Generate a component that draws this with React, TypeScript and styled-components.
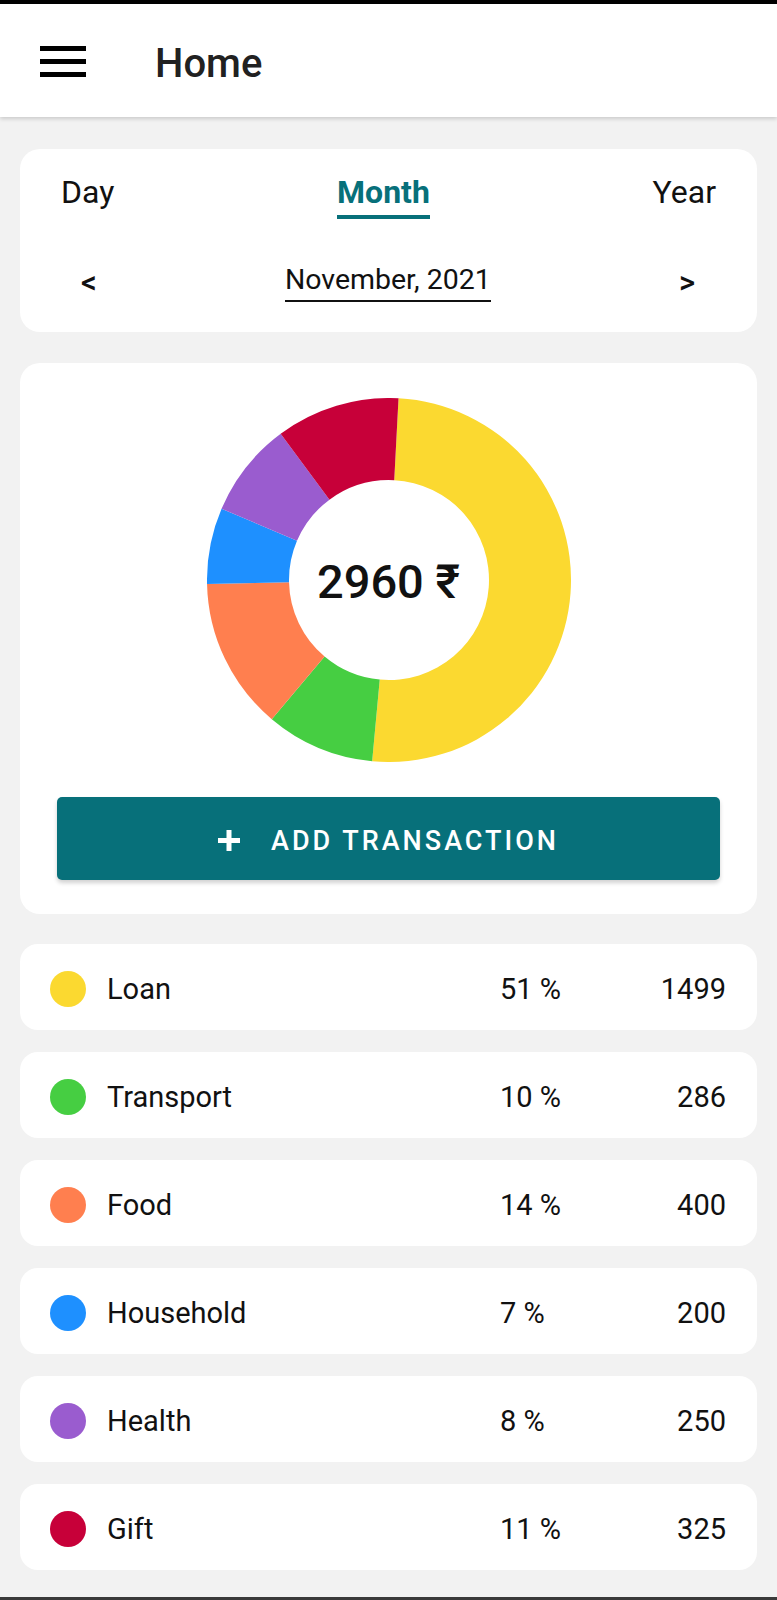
import React from "react";
import styled, { createGlobalStyle } from "styled-components";

const GlobalStyle = createGlobalStyle`
  html, body {
    margin: 0;
    padding: 0;
    background: #f2f2f2;
    font-family: Roboto, "Noto Sans", "DejaVu Sans", sans-serif;
  }
  * { box-sizing: border-box; }
`;

const TEAL = "#07707a";

type Item = { name: string; value: number; color: string };

const items: Item[] = [
  { name: "Loan", value: 1499, color: "#fbd930" },
  { name: "Transport", value: 286, color: "#46ce42" },
  { name: "Food", value: 400, color: "#ff7f4f" },
  { name: "Household", value: 200, color: "#1e90ff" },
  { name: "Health", value: 250, color: "#9a5ccf" },
  { name: "Gift", value: 325, color: "#c70039" },
];

const Page = styled.div`
  height: 1600px;
  display: flex;
  flex-direction: column;
  border-top: 4px solid #000;
  border-bottom: 3px solid #3a3a3a;
  background: #f2f2f2;
  overflow: hidden;
`;

const Header = styled.header`
  height: 113px;
  flex-shrink: 0;
  background: #fff;
  display: flex;
  align-items: center;
  padding-left: 40px;
  gap: 69px;
  box-shadow: 0 2px 4px rgba(0, 0, 0, 0.16);
  position: relative;
  z-index: 1;
`;

const Burger = styled.div`
  width: 46px;
  display: flex;
  flex-direction: column;
  gap: 8px;
  margin-top: 1px;
  & > span {
    display: block;
    height: 5px;
    background: #000;
  }
`;

const Title = styled.h1`
  margin: 0;
  font-size: 40px;
  font-weight: 500;
  color: #212121;
  line-height: 1;
  margin-top: 6px;
`;

const Content = styled.main`
  padding: 32px 20px 0;
  display: flex;
  flex-direction: column;
`;

const Card = styled.section`
  background: #fff;
  border-radius: 20px;
`;

const TabCard = styled(Card)`
  padding: 24px 41px 30px;
  display: flex;
  flex-direction: column;
  gap: 44px;
`;

const Tabs = styled.div`
  display: flex;
  justify-content: space-between;
  align-items: flex-start;
`;

const Tab = styled.div<{ $active?: boolean }>`
  display: flex;
  flex-direction: column;
  align-items: stretch;
  font-size: 32px;
  line-height: 38px;
  font-weight: ${(p) => (p.$active ? 700 : 400)};
  color: ${(p) => (p.$active ? TEAL : "#111")};
  &::after {
    content: "";
    display: block;
    height: 4px;
    margin-top: 4px;
    background: ${(p) => (p.$active ? TEAL : "transparent")};
  }
`;

const NavRow = styled.div`
  display: flex;
  justify-content: space-between;
  align-items: center;
  padding: 0 21px 0 20px;
`;

const Arrow = styled.span`
  font-size: 31px;
  font-weight: 500;
  line-height: 34px;
  color: #111;
`;

const Period = styled.span`
  font-size: 28.5px;
  line-height: 34px;
  color: #111;
  padding-bottom: 3px;
  border-bottom: 2px solid #111;
`;

const ChartCard = styled(Card)`
  margin-top: 31px;
  padding: 35px 37px 34px;
  display: flex;
  flex-direction: column;
  align-items: center;
  gap: 35px;
`;

const DonutWrap = styled.div`
  position: relative;
  width: 364px;
  height: 364px;
`;

const Total = styled.div`
  position: absolute;
  inset: 0;
  display: flex;
  align-items: center;
  justify-content: center;
  font-size: 47px;
  font-weight: 500;
  color: #111;
  padding-top: 2px;
`;

const AddButton = styled.button`
  width: 100%;
  height: 83px;
  border: none;
  border-radius: 5px;
  background: ${TEAL};
  color: #fff;
  display: flex;
  align-items: center;
  justify-content: center;
  gap: 31px;
  font-family: inherit;
  font-size: 27px;
  font-weight: 500;
  letter-spacing: 3px;
  box-shadow: 0 3px 4px rgba(0, 0, 0, 0.18);
  padding: 4px 0 0 0;
`;

const List = styled.div`
  margin-top: 30px;
  display: flex;
  flex-direction: column;
  gap: 22px;
`;

const Row = styled.div`
  height: 86px;
  background: #fff;
  border-radius: 18px;
  display: flex;
  align-items: center;
  padding: 3px 31px 0 30px;
  font-size: 29px;
  color: #111;
`;

const Dot = styled.span<{ $color: string }>`
  width: 36px;
  height: 36px;
  border-radius: 50%;
  background: ${(p) => p.$color};
  flex-shrink: 0;
`;

const Label = styled.span`
  flex: 1;
  margin-left: 21px;
`;

const Percent = styled.span`
  width: 126px;
`;

const Amount = styled.span`
  width: 100px;
  text-align: right;
`;

function polar(cx: number, cy: number, r: number, deg: number) {
  const a = ((deg - 90) * Math.PI) / 180;
  return [cx + r * Math.cos(a), cy + r * Math.sin(a)];
}

function slicePath(cx: number, cy: number, R: number, r: number, a0: number, a1: number) {
  const [x0, y0] = polar(cx, cy, R, a0);
  const [x1, y1] = polar(cx, cy, R, a1);
  const [x2, y2] = polar(cx, cy, r, a1);
  const [x3, y3] = polar(cx, cy, r, a0);
  const large = a1 - a0 > 180 ? 1 : 0;
  return `M${x0} ${y0} A${R} ${R} 0 ${large} 1 ${x1} ${y1} L${x2} ${y2} A${r} ${r} 0 ${large} 0 ${x3} ${y3} Z`;
}

function Donut({ data }: { data: Item[] }) {
  const total = data.reduce((s, d) => s + d.value, 0);
  let angle = 3;
  return (
    <svg width={364} height={364} viewBox="0 0 364 364">
      {data.map((d) => {
        const a0 = angle;
        const a1 = angle + (d.value / total) * 360;
        angle = a1;
        return <path key={d.name} d={slicePath(182, 182, 182, 100, a0, a1)} fill={d.color} />;
      })}
    </svg>
  );
}

function PlusIcon() {
  return (
    <svg width="22" height="21" viewBox="0 0 22 21">
      <rect x="8.5" y="0" width="5" height="21" fill="#fff" />
      <rect x="0" y="8" width="22" height="5" fill="#fff" />
    </svg>
  );
}

export default function App() {
  const total = items.reduce((s, d) => s + d.value, 0);
  return (
    <>
      <GlobalStyle />
      <Page>
        <Header>
          <Burger>
            <span />
            <span />
            <span />
          </Burger>
          <Title>Home</Title>
        </Header>
        <Content>
          <TabCard>
            <Tabs>
              <Tab>Day</Tab>
              <Tab $active>Month</Tab>
              <Tab>Year</Tab>
            </Tabs>
            <NavRow>
              <Arrow>&lt;</Arrow>
              <Period>November, 2021</Period>
              <Arrow>&gt;</Arrow>
            </NavRow>
          </TabCard>
          <ChartCard>
            <DonutWrap>
              <Donut data={items} />
              <Total>{total} ₹</Total>
            </DonutWrap>
            <AddButton>
              <PlusIcon />
              ADD TRANSACTION
            </AddButton>
          </ChartCard>
          <List>
            {items.map((it) => (
              <Row key={it.name}>
                <Dot $color={it.color} />
                <Label>{it.name}</Label>
                <Percent>{Math.round((it.value / total) * 100)} %</Percent>
                <Amount>{it.value}</Amount>
              </Row>
            ))}
          </List>
        </Content>
      </Page>
    </>
  );
}
